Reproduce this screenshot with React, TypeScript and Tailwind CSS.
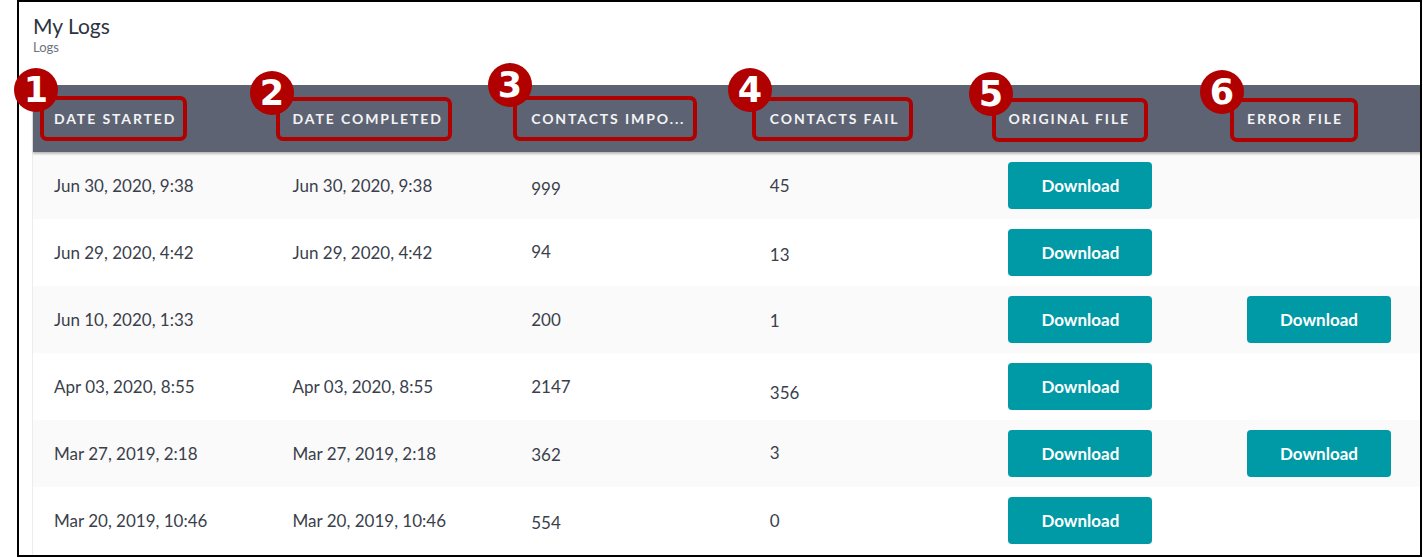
import React from 'react';

type Row = { started: string; completed: string; imported: string; failed: string; errorFile: boolean; impPad: string; failPad: string };

const rows: Row[] = [
  { started: 'Jun 30, 2020, 9:38', completed: 'Jun 30, 2020, 9:38', imported: '999', failed: '45', errorFile: false, impPad: 'pt-[6px]', failPad: 'pt-0' },
  { started: 'Jun 29, 2020, 4:42', completed: 'Jun 29, 2020, 4:42', imported: '94', failed: '13', errorFile: false, impPad: 'pb-[2px]', failPad: 'pt-[4px]' },
  { started: 'Jun 10, 2020, 1:33', completed: '', imported: '200', failed: '1', errorFile: true, impPad: 'pt-0', failPad: 'pt-[2px]' },
  { started: 'Apr 03, 2020, 8:55', completed: 'Apr 03, 2020, 8:55', imported: '2147', failed: '356', errorFile: false, impPad: 'pt-0', failPad: 'pt-[12px]' },
  { started: 'Mar 27, 2019, 2:18', completed: 'Mar 27, 2019, 2:18', imported: '362', failed: '3', errorFile: true, impPad: 'pt-[2px]', failPad: 'pb-[2px]' },
  { started: 'Mar 20, 2019, 10:46', completed: 'Mar 20, 2019, 10:46', imported: '554', failed: '0', errorFile: false, impPad: 'pt-[4px]', failPad: 'pt-0' },
];

const headers = ['Date Started', 'Date Completed', 'Contacts Impo...', 'Contacts Fail', 'Original File', 'Error File'];

// callout overlays drawn on top of the screenshot (page coordinates)
const boxes = [
  { n: '1', box: 'left-[40px] top-[96px] w-[147px] h-[45px]', dot: 'left-[14px] top-[68px]' },
  { n: '2', box: 'left-[276px] top-[97px] w-[176px] h-[44px]', dot: 'left-[250px] top-[71px]' },
  { n: '3', box: 'left-[513px] top-[96px] w-[184px] h-[45px]', dot: 'left-[488px] top-[63px]' },
  { n: '4', box: 'left-[752px] top-[97px] w-[161px] h-[44px]', dot: 'left-[728px] top-[68px]' },
  { n: '5', box: 'left-[992px] top-[98px] w-[156px] h-[44px]', dot: 'left-[969px] top-[72px]' },
  { n: '6', box: 'left-[1230px] top-[98px] w-[128px] h-[44px]', dot: 'left-[1200px] top-[70px]' },
];

const DownloadButton = () => (
  <button className="w-[144px] h-[47px] rounded-[4px] bg-[#0099a6] text-white text-[17px] font-bold">Download</button>
);

const cell = 'w-[238.6px] shrink-0 pl-[21px]';

export default function App() {
  return (
    <div className="relative w-[1423px] h-[558px] bg-white pl-[17px] overflow-hidden font-['Lato',sans-serif]">
      <div className="w-[1405px] h-[557px] border-2 border-black overflow-hidden flex flex-col">
        <div className="pl-[14px] pt-[11px] h-[83px]">
          <h1 className="text-[21px] leading-[26px] text-[#2c3340]">My Logs</h1>
          <p className="text-[13px] leading-[16px] text-[#6b7280]">Logs</p>
        </div>

        <div className="ml-[13px] flex-1 border-l border-[#ececec]">
          <div className="flex h-[67px] bg-[#5e6373] shadow-[0_2px_2px_rgba(0,0,0,0.25)] relative w-[1440px] items-center">
            {headers.map((h) => (
              <div key={h} className={`${cell} text-[14px] font-bold uppercase tracking-[1.9px] text-[#f3f4f6]`}>
                {h}
              </div>
            ))}
          </div>

          {rows.map((r, i) => (
            <div key={i} className={`flex h-[67px] items-center w-[1440px] text-[17px] text-[#3a3f4c] ${i % 2 === 0 ? 'bg-[#fafafa]' : 'bg-white'}`}>
              <div className={cell}>{r.started}</div>
              <div className={cell}>{r.completed}</div>
              <div className={`${cell} ${r.impPad}`}>{r.imported}</div>
              <div className={`${cell} ${r.failPad}`}>{r.failed}</div>
              <div className={cell}><DownloadButton /></div>
              <div className={cell}>{r.errorFile && <DownloadButton />}</div>
            </div>
          ))}
        </div>
      </div>

      {boxes.map((b) => (
        <React.Fragment key={b.n}>
          <div className={`absolute ${b.box} border-[4px] border-[#b00000] rounded-[7px]`} />
          <div className={`absolute ${b.dot} w-[44px] h-[44px] rounded-full bg-[#b00000] flex items-center justify-center text-white text-[35px] font-bold leading-none font-['DejaVu_Sans',sans-serif]`}>
            {b.n}
          </div>
        </React.Fragment>
      ))}
    </div>
  );
}
